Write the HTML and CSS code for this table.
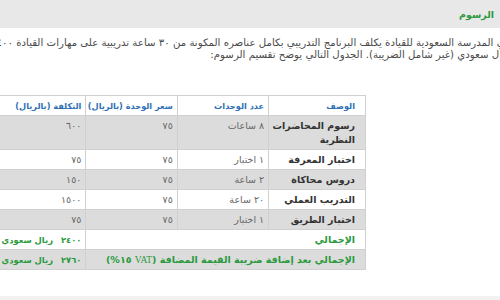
FILE: index.html
```html
<!DOCTYPE html>
<html lang="ar" dir="rtl">
<head>
<meta charset="utf-8">
<link rel="stylesheet" href="styles.css">
</head>
<body>
<div class="page">
  <div class="bar"><h2 class="bar-title">الرسوم</h2></div>
  <div class="content">
    <p class="intro">في المدرسة السعودية للقيادة يكلف البرنامج التدريبي بكامل عناصره المكونة من ٣٠ ساعة تدريبية على مهارات القيادة ٢٤٠٠<br>ريال سعودي (غير شامل الضريبة). الجدول التالي يوضح تقسيم الرسوم:</p>
    <table class="fees">
      <thead>
        <tr><th>الوصف</th><th>عدد الوحدات</th><th>سعر الوحدة (بالريال)</th><th>التكلفة (بالريال)</th></tr>
      </thead>
      <tbody>
        <tr class="alt"><td class="desc">رسوم المحاضرات النظرية</td><td>٨ ساعات</td><td>٧٥</td><td>٦٠٠</td></tr>
        <tr><td class="desc">اختبار المعرفة</td><td>١ اختبار</td><td>٧٥</td><td>٧٥</td></tr>
        <tr class="alt"><td class="desc">دروس محاكاة</td><td>٢ ساعة</td><td>٧٥</td><td>١٥٠</td></tr>
        <tr><td class="desc">التدريب العملي</td><td>٢٠ ساعة</td><td>٧٥</td><td>١٥٠٠</td></tr>
        <tr class="alt"><td class="desc">اختبار الطريق</td><td>١ اختبار</td><td>٧٥</td><td>٧٥</td></tr>
        <tr class="total"><td class="desc" colspan="3">الإجمالي</td><td class="sum"><span class="num">٢٤٠٠</span>ريال سعودي</td></tr>
        <tr class="total alt"><td class="desc" colspan="3">الإجمالي بعد إضافة ضريبة القيمة المضافة (<span class="latin">VAT</span> ١٥%)</td><td class="sum"><span class="num">٢٧٦٠</span>ريال سعودي</td></tr>
      </tbody>
    </table>
  </div>
  <div class="footer"></div>
</div>
</body>
</html>
```
FILE: styles.css
```css
html, body {
  margin: 0;
  padding: 0;
  overflow: hidden;
  background: #ffffff;
}
.page {
  width: 500px;
  height: 300px;
  overflow: hidden;
  font-family: "DejaVu Sans", sans-serif;
  color: #444;
}
.bar {
  height: 28px;
  background: #e8e8e8;
  display: flex;
  align-items: center;
  padding-right: 6px;
}
.bar-title {
  margin: 0;
  font-size: 9.5px;
  font-weight: bold;
  color: #2f9a44;
}
.content {
  height: 268px;
  display: flex;
  flex-direction: column;
}
.intro {
  margin: 9px -10px 0 0;
  font-size: 10.2px;
  line-height: 12px;
  white-space: nowrap;
  color: #4a4a4a;
}
.fees {
  margin: 34px 134px 0 0;
  width: 372px;
  table-layout: fixed;
  border-collapse: collapse;
  font-size: 9.5px;
  flex: none;
}
.fees th, .fees td {
  border: 1px solid #d0d0d0;
  text-align: right;
  vertical-align: top;
  padding: 3px 4px 2px 3px;
  line-height: 14px;
  width: 25%;
  white-space: nowrap;
}
.fees th {
  color: #2f6fb4;
  font-weight: bold;
  font-size: 8.2px;
  overflow: hidden;
}
.fees td {
  color: #666;
}
.fees td.desc, .fees th:first-child {
  padding-right: 10px;
}
.fees td.desc {
  color: #333;
  font-weight: bold;
  white-space: normal;
}
.fees tr.total td.desc {
  white-space: nowrap;
}
.fees tr.alt td {
  background: #dcdcdc;
}
.fees tr.total td {
  color: #2a9a3d;
  font-weight: bold;
}
.fees td.sum {
  font-size: 8.4px;
}
.num {
  margin-left: 8px;
}
.latin {
  font-family: "Liberation Serif", serif;
  font-weight: normal;
}
.footer {
  height: 4px;
  background: #f2f2f2;
}
```
